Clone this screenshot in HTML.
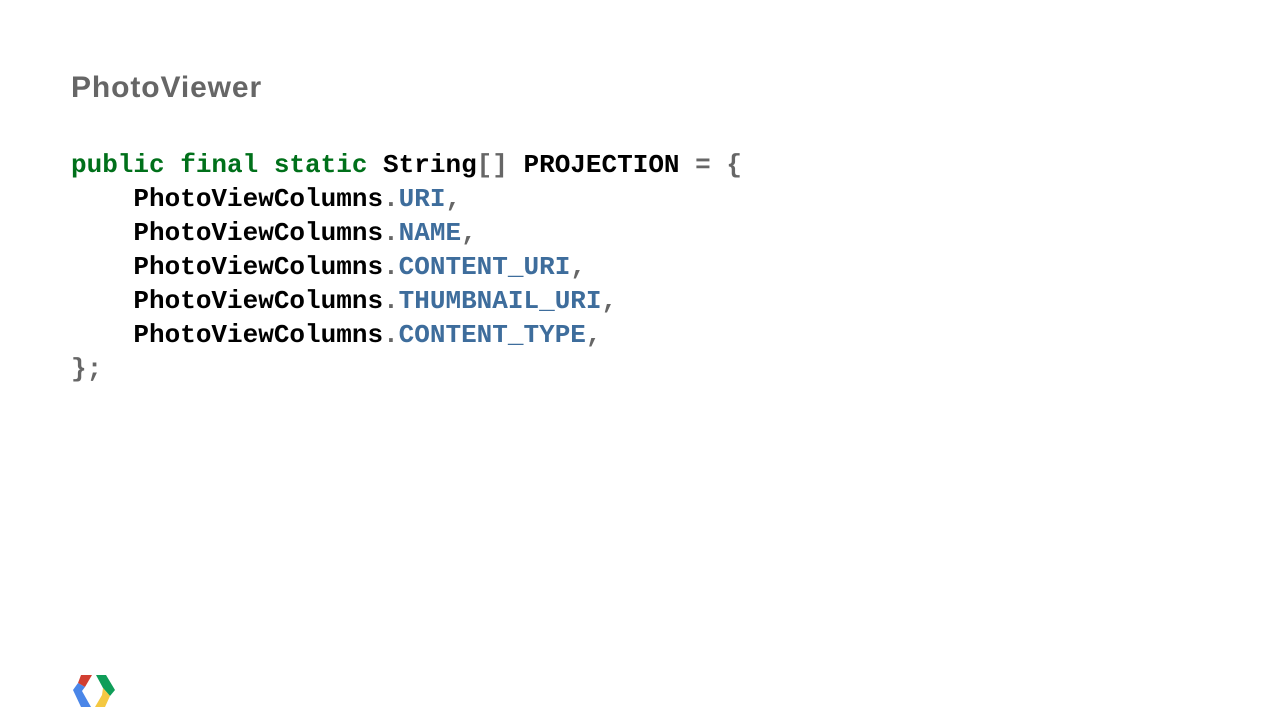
<!DOCTYPE html>
<html><head><style>
body{margin:0;width:1280px;height:720px;background:#fff;position:relative;overflow:hidden}
h1{position:absolute;left:71px;top:71px;margin:0;font:bold 30px "Liberation Sans",sans-serif;color:#666;letter-spacing:0.9px}
pre{position:absolute;left:71px;top:148px;margin:0;font:bold 26px/34px "Liberation Mono",monospace;color:#000}
.k{color:#00701a}.p{color:#666}.f{color:#3e6d9c}
</style></head><body>
<h1>PhotoViewer</h1>
<pre><span class="k">public final static</span> String<span class="p">[]</span> PROJECTION <span class="p">= {</span>
    PhotoViewColumns<span class="p">.</span><span class="f">URI</span><span class="p">,</span>
    PhotoViewColumns<span class="p">.</span><span class="f">NAME</span><span class="p">,</span>
    PhotoViewColumns<span class="p">.</span><span class="f">CONTENT_URI</span><span class="p">,</span>
    PhotoViewColumns<span class="p">.</span><span class="f">THUMBNAIL_URI</span><span class="p">,</span>
    PhotoViewColumns<span class="p">.</span><span class="f">CONTENT_TYPE</span><span class="p">,</span>
<span class="p">};</span></pre>
<svg style="position:absolute;left:72px;top:674px" width="44" height="34" viewBox="0 0 44 34">
<polygon points="9,1 20,1 13,13 6,9" fill="#d23f31"/>
<polygon points="1,16 6,9 13,13 10,17 19,33 9,33" fill="#4a86e8"/>
<polygon points="24,1 34,1 43,16 38,22 31,14" fill="#0f9d58"/>
<polygon points="31,14 38,22 33,33 23,33 30,21" fill="#f4c842"/>
</svg>
</body></html>
